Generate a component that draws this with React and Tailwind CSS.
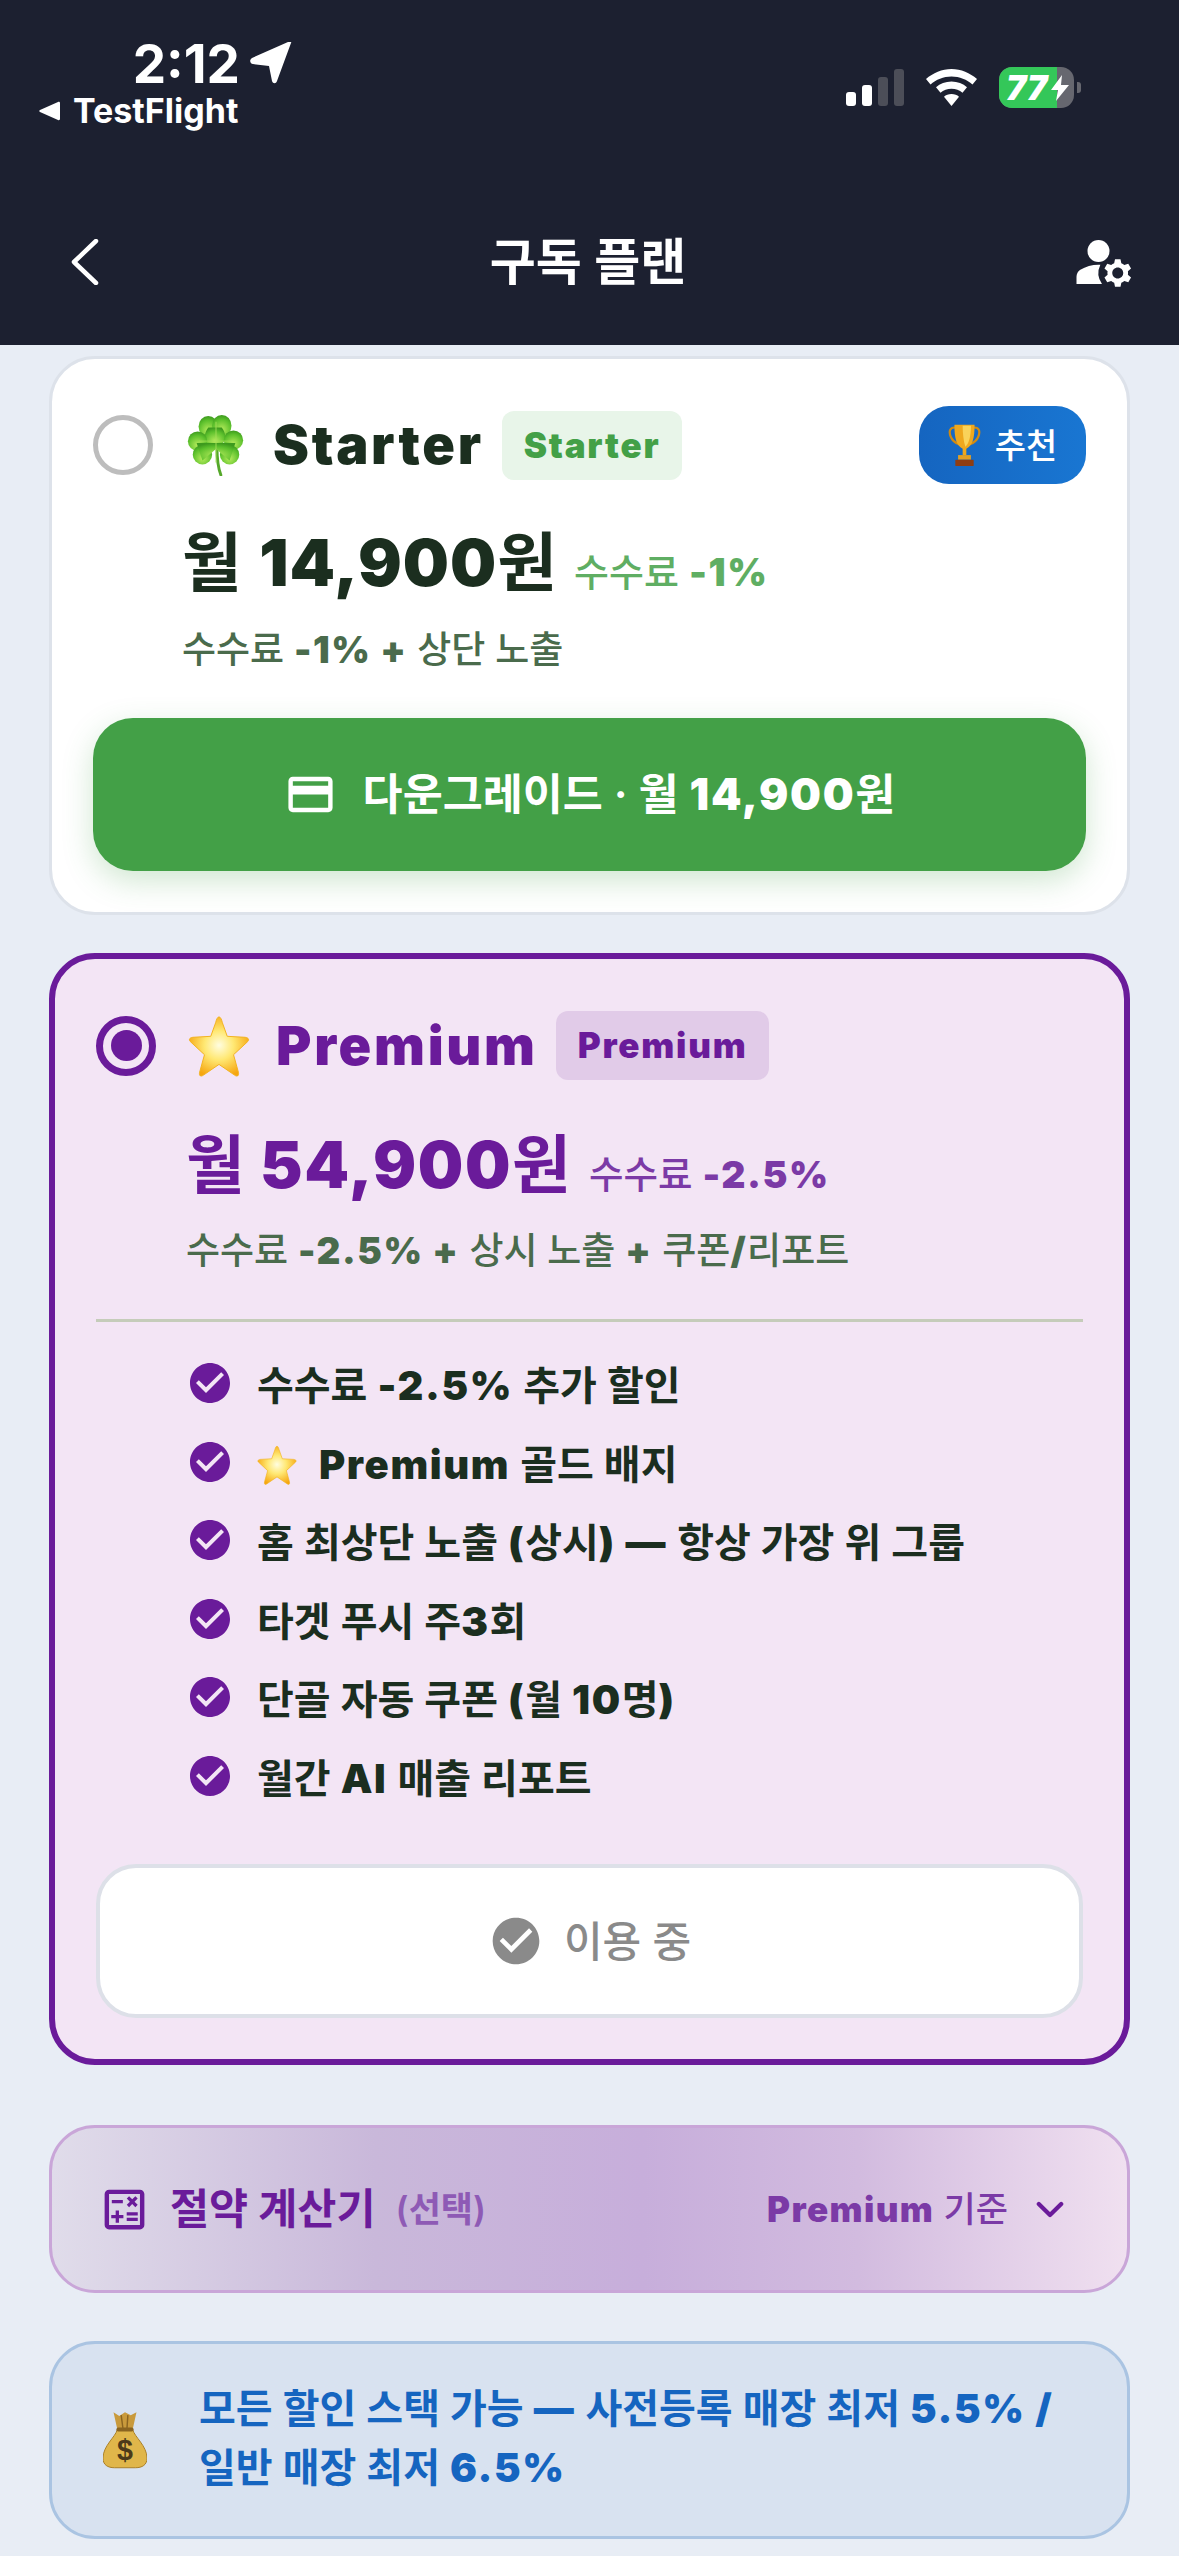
import { MdManageAccounts, MdCheckCircle, MdOutlineCreditCard, MdOutlineCalculate } from 'react-icons/md';

const FONT = "font-['Inter','Noto_Sans_CJK_KR',sans-serif]";

// heavy latin/number run inside lighter korean text
const B = ({ children }) => <span className="font-black tracking-[0.04em]">{children}</span>;

function Clover({ size = 62 }) {
  return (
    <svg width={size} height={size} viewBox="0 0 64 64">
      <defs>
        <radialGradient id="cl" cx="50%" cy="70%" r="70%">
          <stop offset="0%" stopColor="#b6ec5c" />
          <stop offset="70%" stopColor="#5cc02c" />
          <stop offset="100%" stopColor="#3d9a1e" />
        </radialGradient>
      </defs>
      <path d="M33 34 C33 46 34 55 37 63" fill="none" stroke="#55a82a" strokeWidth="3" strokeLinecap="round" />
      <g fill="url(#cl)">
        <ellipse cx="24" cy="13" rx="10" ry="11" />
        <ellipse cx="38" cy="12" rx="10" ry="11" />
        <path d="M31 34 C22 32 16 26 24 14 L38 14 C46 26 40 32 31 34Z" />
        <ellipse cx="13" cy="28" rx="10" ry="10" />
        <ellipse cx="50" cy="27" rx="10" ry="10" />
        <ellipse cx="18" cy="42" rx="10" ry="10" />
        <ellipse cx="46" cy="42" rx="10" ry="10" />
        <path d="M32 30 L12 30 L18 48 L32 36 L46 48 L52 30Z" />
      </g>
      <path d="M32 8 L32 50 M14 28 L50 28" stroke="#a6e05a" strokeWidth="1.5" opacity="0.6" />
    </svg>
  );
}

function Star({ size = 62, id = 'st' }) {
  return (
    <svg width={size} height={size} viewBox="0 0 64 64">
      <defs>
        <radialGradient id={id} cx="50%" cy="48%" r="55%">
          <stop offset="0%" stopColor="#fffde0" />
          <stop offset="45%" stopColor="#ffe873" />
          <stop offset="100%" stopColor="#f6a60f" />
        </radialGradient>
      </defs>
      <path
        d="M32 2 C33.5 2 34.5 4 35.5 8 L40.5 22 L59 23 C63 23.5 63.5 26 61 28 L47 41 L52 59 C53 63 50.5 64 48 62 L32 51 L16 62 C13.5 64 11 63 12 59 L17 41 L3 28 C.5 26 1 23.5 5 23 L23.5 22 L28.5 8 C29.5 4 30.5 2 32 2Z"
        fill={`url(#${id})`}
        stroke="#f2b21f"
        strokeWidth="1"
      />
    </svg>
  );
}

function Trophy() {
  return (
    <svg width="33" height="44" viewBox="0 0 36 48">
      <path d="M9 5 C1 4 1 10 3 15 C5 20 9 22 12 23" fill="none" stroke="#d08a12" strokeWidth="2.4" />
      <path d="M27 5 C35 4 35 10 33 15 C31 20 27 22 24 23" fill="none" stroke="#d08a12" strokeWidth="2.4" />
      <path d="M7 2 H29 C29 16 27 25 20 28 V35 H16 V28 C9 25 7 16 7 2Z" fill="#eea81e" />
      <path d="M16 3 H25 C25 14 23 22 19 26 C17 20 16 12 16 3Z" fill="#f9d35a" />
      <rect x="11" y="35" width="14" height="5" fill="#e2a024" />
      <rect x="8" y="40" width="20" height="7" rx="1" fill="#8e3d12" />
    </svg>
  );
}

function MoneyBag() {
  return (
    <svg width="44" height="60" viewBox="0 0 46 60">
      <path d="M11 1 L17 5 L23 1 L29 4 L35 1 L31 19 H15Z" fill="#c99a3c" />
      <path d="M19 4 L21 19 M26 4 L25 19" stroke="#8a6420" strokeWidth="1.5" />
      <path d="M15 19 H31 C33 27 46 36 46 49 C46 56 41 59 34 59 H12 C5 59 0 56 0 49 C0 36 13 27 15 19Z" fill="#e0b64a" stroke="#a87d24" strokeWidth="1" />
      <rect x="14" y="17" width="18" height="4" rx="2" fill="#8a6420" />
      <text x="23" y="51" textAnchor="middle" fontSize="30" fontWeight="700" fill="#4b3a1a" fontFamily="Liberation Sans, sans-serif">$</text>
    </svg>
  );
}

function StatusBar() {
  return (
    <div className="flex justify-between pl-[38px] pr-[98px] pt-[36px] h-[216px]">
      <div className="flex flex-col items-end w-[255px]">
        <div className="flex items-center gap-[10px]">
          <span className="text-[53px] leading-[56px] font-bold text-white">2:12</span>
          <svg width="43" height="42" viewBox="0 0 43 42" className="-mt-[2px]">
            <path d="M41 1 L27 39 C26 42 23 42 22 39 L19 24 L3 22 C0 22 -1 18 2 16 L38 0 C40 -1 42 -1 41 1Z" fill="#fff" />
          </svg>
        </div>
        <div className="flex items-center gap-[13px] self-start">
          <svg width="22" height="20" viewBox="0 0 22 20"><path d="M20 1 L2 9 C1 9.5 1 10.5 2 11 L20 19 C21 19.5 22 19 22 18 V2 C22 1 21 .5 20 1Z" fill="#fff" /></svg>
          <span className="text-[34px] leading-[38px] font-bold text-white">TestFlight</span>
        </div>
      </div>
      <div className="flex items-start gap-[22px] pt-[31px]">
        <div className="flex items-end gap-[6px] h-[37px] mt-[2px]">
          <div className="w-[10px] h-[14px] rounded-[3px] bg-white" />
          <div className="w-[10px] h-[21px] rounded-[3px] bg-white" />
          <div className="w-[10px] h-[29px] rounded-[3px] bg-[#4c4e58]" />
          <div className="w-[10px] h-[37px] rounded-[3px] bg-[#4c4e58]" />
        </div>
        <svg width="51" height="38" viewBox="0 0 51 38" className="mt-[2px]">
          <path d="M25.5 0 C35 0 44 4 51 10 L46.5 15.5 C41 10.5 33.5 7.5 25.5 7.5 C17.5 7.5 10 10.5 4.5 15.5 L0 10 C7 4 16 0 25.5 0Z" fill="#fff" />
          <path d="M25.5 12.5 C31.5 12.5 37 14.7 41 18.3 L36.5 23.8 C33.5 21.2 29.7 19.7 25.5 19.7 C21.3 19.7 17.5 21.2 14.5 23.8 L10 18.3 C14 14.7 19.5 12.5 25.5 12.5Z" fill="#fff" />
          <path d="M25.5 25 C28.5 25 31.2 26 33 27.8 L25.5 37 L18 27.8 C19.8 26 22.5 25 25.5 25Z" fill="#fff" />
        </svg>
        <div className="flex items-center gap-[3px]">
          <div className="relative w-[75px] h-[41px] rounded-[13px] bg-[#66676f] overflow-hidden">
            <div className="h-full w-[58px] bg-[#34c759]" />
            <span className="absolute left-[7px] top-0 text-[34px] leading-[41px] font-black italic text-white">77</span>
            <svg width="18" height="26" viewBox="0 0 18 26" className="absolute left-[52px] top-[8px]">
              <path d="M11 0 L0 15 H7 L5 26 L18 10 H10Z" fill="#fff" />
            </svg>
          </div>
          <div className="w-[4px] h-[11px] rounded-r-[3px] bg-[#66676f]" />
        </div>
      </div>
    </div>
  );
}

function NavBar() {
  return (
    <div className="flex items-center justify-between pl-[71px] pr-[42px] h-[129px] pb-[38px]">
      <svg width="28" height="46" viewBox="0 0 28 46">
        <path d="M25 2 L3 23 L25 44" fill="none" stroke="#fff" strokeWidth="4.5" strokeLinecap="round" strokeLinejoin="round" />
      </svg>
      <h1 className="text-[50px] leading-none font-semibold text-white ml-[6px]">구독 플랜</h1>
      <MdManageAccounts className="text-white text-[66px]" />
    </div>
  );
}

function PlanTitle({ selected, icon, name, color, badgeBg, badgeColor }) {
  return (
    <div className="flex items-center">
      {selected ? (
        <div className="w-[60px] h-[60px] rounded-full border-[7px] border-[#6a1b9a] flex items-center justify-center">
          <div className="w-[31px] h-[31px] rounded-full bg-[#6a1b9a]" />
        </div>
      ) : (
        <div className="w-[60px] h-[60px] rounded-full border-[5px] border-[#bdbdbd]" />
      )}
      <div className="ml-[32px] w-[62px]">{icon}</div>
      <span className={`ml-[26px] text-[54px] leading-none font-black tracking-[0.05em] ${color}`}>{name}</span>
      <span className={`ml-[18px] px-[22px] h-[69px] flex items-center rounded-[12px] text-[35px] font-black tracking-[0.05em] ${badgeBg} ${badgeColor}`}>{name}</span>
    </div>
  );
}

const features = [
  <>수수료 <B>-2.5%</B> 추가 할인</>,
  <span className="flex items-center"><Star size={40} id="st2" /><span className="ml-[22px]"><B>Premium</B> 골드 배지</span></span>,
  <>홈 최상단 노출 <B>(</B>상시<B>) —</B> 항상 가장 위 그룹</>,
  <>타겟 푸시 주<B>3</B>회</>,
  <>단골 자동 쿠폰 <B>(</B>월 <B>10</B>명<B>)</B></>,
  <>월간 <B>AI</B> 매출 리포트</>,
];

export default function App() {
  return (
    <div className={`w-[1179px] h-[2556px] overflow-hidden bg-[#e8edf5] ${FONT}`}>
      <header className="bg-[#1c2030]">
        <StatusBar />
        <NavBar />
      </header>

      <main className="px-[49px] pt-[11px]">
        {/* Starter */}
        <section className="h-[559px] rounded-[46px] border-[3px] border-[#dde2ea] bg-white pl-[41px] pr-[41px] pt-[47px]">
          <div className="flex items-center justify-between">
            <PlanTitle
              icon={<Clover />}
              name="Starter"
              color="text-[#1b2e1f]"
              badgeBg="bg-[#e8f5e9]"
              badgeColor="text-[#43a047]"
            />
            <span className="h-[78px] w-[167px] rounded-[30px] bg-gradient-to-r from-[#1565c0] to-[#1976d2] flex items-center justify-center gap-[14px] text-[34px] font-medium text-white">
              <Trophy />
              추천
            </span>
          </div>
          <div className="mt-[37px] pl-[89px] flex items-baseline">
            <span className="text-[65px] leading-[84px] font-bold tracking-[0.015em] text-[#1b2e1f]">월 <span className="font-black">14,900</span>원</span>
            <span className="ml-[16px] text-[38px] font-medium text-[#5fae63]">수수료 <B>-1%</B></span>
          </div>
          <p className="mt-[22px] pl-[89px] text-[37px] leading-[46px] font-medium text-[#4a6b4c]">
            수수료 <B>-1% +</B> 상단 노출
          </p>
          <button className="mt-[45px] w-full h-[153px] rounded-[40px] bg-[#43a047] shadow-[0_10px_30px_rgba(67,160,71,0.25)] flex items-center justify-center gap-[26px] text-[43.5px] font-semibold text-white">
            <MdOutlineCreditCard className="text-[53px]" />
            <span>다운그레이드 · 월 <B>14,900</B>원</span>
          </button>
        </section>

        {/* Premium */}
        <section className="mt-[38px] h-[1112px] rounded-[46px] border-[6px] border-[#6a1b9a] bg-[#f3e5f5] pl-[41px] pr-[41px] pt-[52px]">
          <PlanTitle
            selected
            icon={<Star />}
            name="Premium"
            color="text-[#6a1b9a]"
            badgeBg="bg-[#e1cbe8]"
            badgeColor="text-[#6a1b9a]"
          />
          <div className="mt-[43px] pl-[90px] flex items-baseline">
            <span className="text-[64px] leading-[84px] font-bold text-[#6a1b9a]">월 <span className="font-black tracking-[0.025em]">54,900</span>원</span>
            <span className="ml-[18px] text-[37.5px] font-medium text-[#7b3aa6]">수수료 <B>-2.5%</B></span>
          </div>
          <p className="mt-[21px] pl-[90px] text-[37px] leading-[46px] font-medium text-[#4a6b4c]">
            수수료 <B>-2.5% +</B> 상시 노출 <B>+</B> 쿠폰<B>/</B>리포트
          </p>
          <div className="mt-[45px] h-[3px] bg-[#c5ccba]" />
          <ul className="mt-[25px] pl-[94px] flex flex-col">
            {features.map((f, i) => (
              <li key={i} className="h-[78.5px] flex items-center text-[40px] font-semibold text-[#1b2e1f]">
                <MdCheckCircle className="text-[48px] text-[#6a1b9a] -ml-[4px] -mt-[6px] shrink-0" />
                <span className="ml-[23px]">{f}</span>
              </li>
            ))}
          </ul>
          <button className="mt-[46px] w-full h-[154px] rounded-[40px] bg-white border-[4px] border-[#dde0e8] flex items-center justify-center gap-[20px] text-[42px] font-medium text-[#8a8a8a]">
            <MdCheckCircle className="text-[56px]" />
            이용 중
          </button>
        </section>

        {/* 절약 계산기 */}
        <button className="mt-[60px] w-full h-[168px] rounded-[46px] border-[3px] border-[#c9a6d8] bg-[linear-gradient(90deg,#e0dcea_0%,#c9b8da_30%,#c7aedb_55%,#d2bbdf_75%,#f0e0f0_100%)] flex items-center pl-[53px] pr-[63px]">
          <MdOutlineCalculate className="text-[53px] text-[#6a1b9a] -ml-[7px] -mr-[7px]" />
          <span className="ml-[26px] text-[42.5px] font-bold text-[#6a1b9a]">절약 계산기</span>
          <span className="ml-[20px] text-[35px] font-semibold text-[#8e5ab5]">(선택)</span>
          <span className="ml-auto text-[35px] font-medium text-[#7b3aa6]"><B>Premium</B> 기준</span>
          <svg width="28" height="17" viewBox="0 0 30 18" className="ml-[28px]">
            <path d="M3 3 L15 15 L27 3" fill="none" stroke="#6a1b9a" strokeWidth="4.5" strokeLinecap="round" strokeLinejoin="round" />
          </svg>
        </button>

        {/* 안내 */}
        <div className="mt-[48px] h-[198px] rounded-[46px] border-[3px] border-[#aac4e2] bg-[#d8e2f0] flex items-center pl-[51px] pr-[30px]">
          <MoneyBag />
          <p className="ml-[52px] -mt-[4px] text-[40px] leading-[59px] font-semibold text-[#1565c0]">
            모든 할인 스택 가능 <B>—</B> 사전등록 매장 최저 <B>5.5% /</B>
            <br />
            일반 매장 최저 <B>6.5%</B>
          </p>
        </div>
      </main>
    </div>
  );
}
